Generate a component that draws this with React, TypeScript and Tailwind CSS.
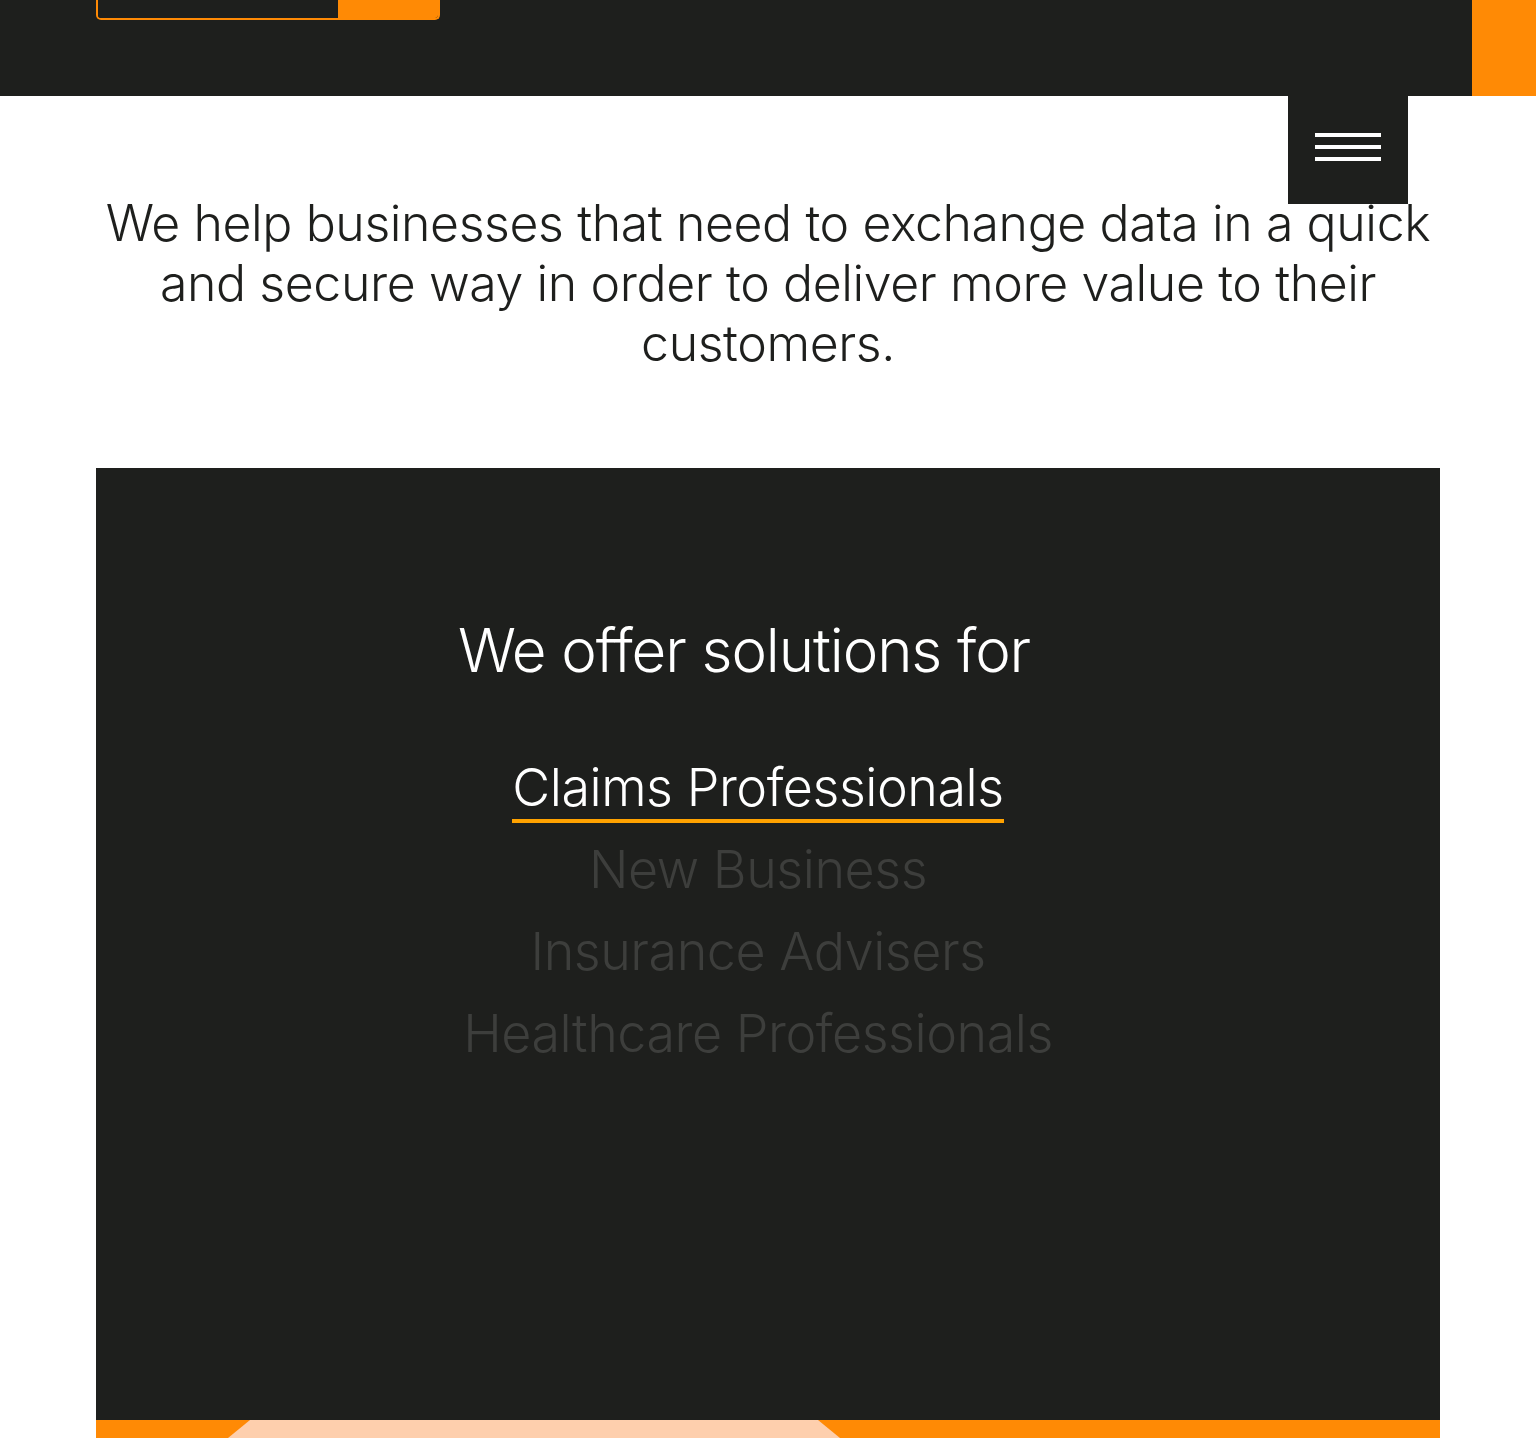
import React from 'react';

const items = ['Claims Professionals', 'New Business', 'Insurance Advisers', 'Healthcare Professionals'];

const App: React.FC = () => {
  return (
    <div className="bg-white min-h-screen relative overflow-hidden" style={{ fontFamily: 'Inter, "Liberation Sans", Arial, sans-serif' }}>
      {/* header */}
      <div className="flex h-[96px]">
        <div className="flex-1 bg-[#1e1f1d]">
          <div className="ml-[96px] w-[344px] h-[20px] flex border-2 border-t-0 border-[#ff8a05] rounded-b-[5px] overflow-hidden">
            <div className="flex-1 bg-[#1e1f1d]"></div>
            <div className="w-[100px] bg-[#ff8a05]"></div>
          </div>
        </div>
        <div className="w-[64px] bg-[#ff8a05]"></div>
      </div>

      <button className="absolute top-[96px] left-[1288px] w-[120px] h-[108px] bg-[#1e1f1d] flex flex-col items-center pt-[37px] gap-[8px]">
        <span className="block w-[66px] h-[4px] bg-white"></span>
        <span className="block w-[66px] h-[4px] bg-white"></span>
        <span className="block w-[66px] h-[4px] bg-white"></span>
      </button>

      <p className="pt-[97px] px-[96px] text-center text-[50px] leading-[60px] font-light text-[#1e1f1d] tracking-[-0.4px]">
        We help businesses that need to exchange data in a quick
        <br />
        and secure way in order to deliver more value to their
        <br />
        customers.
      </p>

      <section className="mx-[96px] mt-[95px] bg-[#1e1f1d]">
        <div className="h-[952px] flex flex-col items-center pt-[142px]">
          <h2 className="text-[60px] leading-[80px] font-light text-white -ml-[48px] tracking-[-1.1px]">We offer solutions for</h2>
          <ul className="mt-[68px] flex flex-col items-center -ml-[20px]">
            {items.map((item, i) => (
              <li key={item} className="h-[82px] flex flex-col items-center">
                <span className={`text-[52px] leading-[60px] font-light tracking-[-0.45px] ${i === 0 ? 'text-white' : 'text-[#3d3e3c]'}`}>{item}</span>
                {i === 0 && <span className="block w-full h-[4px] bg-[#ffa200] mt-[1px]"></span>}
              </li>
            ))}
          </ul>
        </div>
        <div className="h-[18px] bg-[#ff8a05] relative">
          <svg className="absolute left-0 top-0" width="1344" height="18" viewBox="0 0 1344 18">
            <polygon points="154,0 722,0 744,18 132,18" fill="#fecfad" />
          </svg>
        </div>
      </section>
    </div>
  );
};

export default App;
